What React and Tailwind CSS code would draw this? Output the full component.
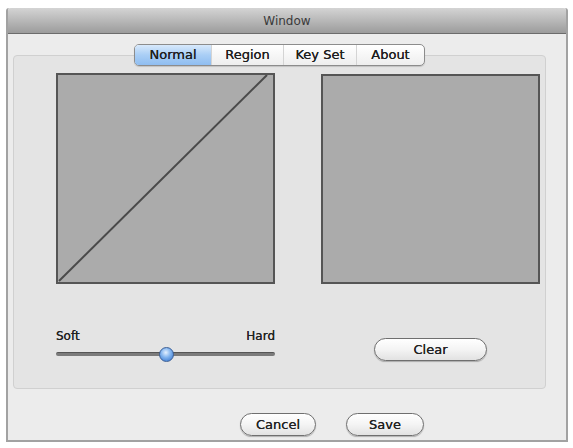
import React, { useState } from "react";

const font = { fontFamily: '"DejaVu Sans", "Liberation Sans", sans-serif' };

const tabs = ["Normal", "Region", "Key Set", "About"];

const PillButton = ({ label, width }) => (
  <button
    className={`${width} h-[23px] rounded-full border border-[#6f6f6f]
      bg-gradient-to-b from-white via-[#f4f4f4] to-[#e2e2e2]
      shadow-[0_1px_1px_rgba(0,0,0,0.25)] text-[13px] text-[#222]
      [text-shadow:0_0_0.6px_#222]
      flex items-center justify-center leading-none`}
  >
    {label}
  </button>
);

const App = () => {
  const [tab, setTab] = useState("Normal");

  return (
    <div className="w-[573px] h-[448px] bg-white overflow-hidden pt-[8px] pl-[6px]" style={font}>
      <div className="w-[562px] h-[434px] flex flex-col bg-[#ececec]
        border-x-2 border-b-2 border-[#a2a2a2] rounded-t-[3px]">

        {/* title bar */}
        <div className="h-[26px] shrink-0 flex items-center justify-center
          bg-gradient-to-b from-[#d4d4d4] via-[#b8b8b8] to-[#9c9c9c]
          border-b border-[#6c6c6c] rounded-t-[3px]">
          <span className="text-[12px] text-[#3a3a3a]">Window</span>
        </div>

        <div className="flex flex-col pt-[10px] pl-[5px]">
          {/* tab group */}
          <div className="w-[533px] flex justify-center relative z-10 -mb-[11px]">
            <div className="h-[22px] flex rounded-[5px] border border-[#8c8c8c] overflow-hidden
              bg-gradient-to-b from-white to-[#eeeeee] shadow-[0_1px_1px_rgba(0,0,0,0.15)]">
              {tabs.map((t, i) => (
                <button
                  key={t}
                  onClick={() => setTab(t)}
                  className={`h-full flex items-center justify-center text-[13px] text-[#1e1e1e]
                    [text-shadow:0_0_0.6px_#1e1e1e]
                    ${i === 0 ? "w-[76px]" : i === 1 ? "w-[72px]" : i === 2 ? "w-[73px]" : "w-[68px]"}
                    ${i > 0 ? "border-l border-[#d4d4d4]" : ""}
                    ${tab === t
                      ? "bg-gradient-to-b from-[#d8e9fb] via-[#a9cef5] to-[#8fbdf0]"
                      : ""}`}
                >
                  {t}
                </button>
              ))}
            </div>
          </div>

          {/* panel */}
          <div className="w-[533px] h-[334px] rounded-[4px] bg-[#e4e4e4]
            border border-[#d0d0d0] flex pl-[42px] pt-[17px] gap-[46px]">

            <div className="w-[219px] flex flex-col">
              <div className="w-[219px] h-[211px] bg-[#ababab] border-2 border-[#555]">
                <svg width="215" height="207" viewBox="0 0 215 207">
                  <line x1="1" y1="206" x2="209" y2="0" stroke="#4a4a4a" strokeWidth="2" />
                </svg>
              </div>
              <div className="mt-[45px] flex justify-between text-[12px] leading-[14px] text-[#222]
                [text-shadow:0_0_0.5px_#222]">
                <span>Soft</span>
                <span>Hard</span>
              </div>
              <div className="relative mt-[9px] h-[4px] rounded-full bg-[#7b7b7b] border-t border-[#555]">
                <div className="absolute left-[103px] -top-[6px] w-[15px] h-[15px] rounded-full
                  border border-[#3b5f96] bg-[radial-gradient(circle_at_45%_35%,#e4f0ff_0%,#7fb2ee_45%,#2f6dc9_100%)]" />
              </div>
            </div>

            <div className="w-[219px] flex flex-col items-center">
              <div className="mt-[1px] w-[219px] h-[210px] bg-[#ababab] border-2 border-[#555]" />
              <div className="mt-[54px]">
                <PillButton label="Clear" width="w-[113px]" />
              </div>
            </div>
          </div>
        </div>

        {/* bottom buttons */}
        <div className="flex gap-[30px] pl-[232px] mt-[24px]">
          <PillButton label="Cancel" width="w-[76px]" />
          <PillButton label="Save" width="w-[78px]" />
        </div>
      </div>
    </div>
  );
};

export default App;
